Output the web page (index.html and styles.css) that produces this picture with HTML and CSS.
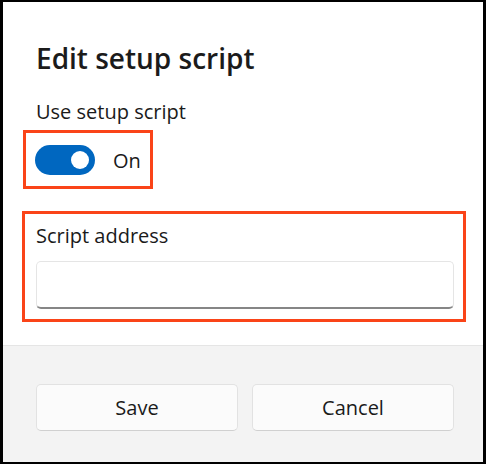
FILE: index.html
```html
<!DOCTYPE html>
<html lang="en">
<head>
    <meta charset="UTF-8">
    <title>Edit setup script</title>
    <link rel="stylesheet" href="styles.css">
</head>
<body>
    <div class="dialog">
        <div class="dialog-body">
            <h2 class="dialog-title">Edit setup script</h2>

            <div class="field-label">Use setup script</div>
            <!-- toggle for turning the setup script on/off -->
            <div class="toggle-row marked">
                <label class="toggle-switch">
                    <input type="checkbox" id="useScript" checked>
                    <span class="slider"></span>
                </label>
                <span class="toggle-state">On</span>
            </div>

            <div class="field marked">
                <label class="field-label" for="scriptAddress">Script address</label>
                <input type="text" id="scriptAddress" class="text-input">
            </div>
        </div>

        <div class="dialog-footer">
            <button class="btn" id="saveButton">Save</button>
            <button class="btn" id="cancelButton">Cancel</button>
        </div>
    </div>
</body>
</html>
```

FILE: styles.css
```css
html, body { margin: 0; padding: 0; }
body {
    font-family: "Open Sans", "Noto Sans", sans-serif;
    color: #1a1a1a;
    background: #000;
}

.dialog {
    width: 480px;
    height: 460px;
    margin: 2px 3px;
    background: #fff;
    display: flex;
    flex-direction: column;
}

.dialog-body {
    padding: 38px 29px 23px 33px;
    border-bottom: 1px solid #e5e5e5;
}

.dialog-title {
    margin: 0 0 22px;
    font-size: 28px;
    line-height: 36px;
    font-weight: 600;
    color: #1b1b1b;
}

.field-label {
    display: block;
    font-size: 20px;
    line-height: 28px;
}

/* orange call-out frames */
.marked {
    border: 3px solid #fa4418;
}

/* toggle */
.toggle-row {
    display: inline-flex;
    align-items: center;
    gap: 18px;
    margin: 4px 0 0 -13px;
    padding: 12px 9px 11px 9px;
}

.toggle-switch {
    position: relative;
    display: block;
    width: 60px;
    height: 30px;
}

.toggle-switch input {
    opacity: 0;
    width: 0;
    height: 0;
    margin: 0;
}

.slider {
    position: absolute;
    top: 0;
    left: 0;
    right: 0;
    bottom: 0;
    background-color: #0067c0;
    border-radius: 15px;
}

.slider:before {
    position: absolute;
    content: "";
    width: 18px;
    height: 18px;
    top: 6px;
    left: 36px;
    background-color: #fff;
    border-radius: 50%;
}

.toggle-state {
    font-size: 20px;
    line-height: 28px;
    padding-top: 2px;
}

/* address field */
.field {
    margin: 22px 0 0 -14px;
    width: 418px;
    padding: 8px 9px 10px 11px;
}

.text-input {
    display: block;
    box-sizing: border-box;
    width: 418px;
    height: 48px;
    margin-top: 11px;
    border: 1px solid #e5e5e5;
    border-bottom: 2px solid #868686;
    border-radius: 5px;
    background: #fff;
    font: inherit;
    font-size: 20px;
    padding: 0 12px;
    outline: none;
}

.dialog-footer {
    flex: 1;
    background: #f3f3f3;
    display: flex;
    gap: 14px;
    padding: 38px 29px 0 33px;
    align-items: flex-start;
}

.btn {
    flex: 1;
    height: 47px;
    background: #fbfbfb;
    border: 1px solid #e2e2e2;
    border-bottom-color: #d0d0d0;
    border-radius: 5px;
    font-family: inherit;
    font-size: 20px;
    color: #1a1a1a;
    padding: 0;
}
```
